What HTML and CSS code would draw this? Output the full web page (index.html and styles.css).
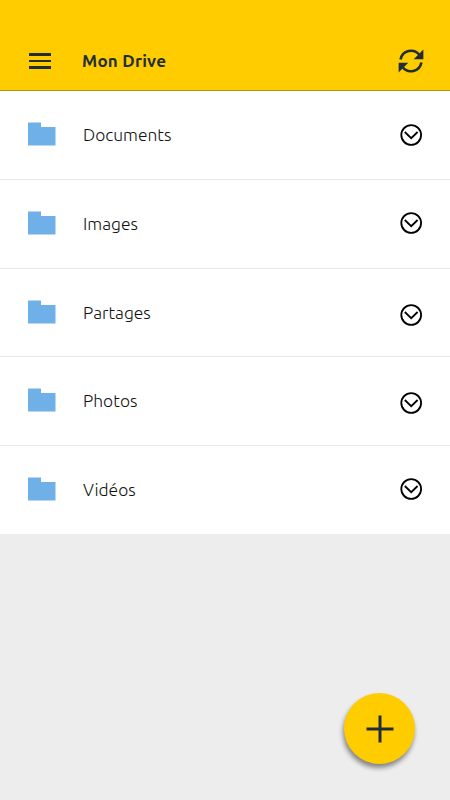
FILE: index.html
```
<!DOCTYPE html>
<html lang="fr">
<head>
    <meta charset="UTF-8">
    <meta name="viewport" content="width=device-width, initial-scale=1.0">
    <title>Mon Drive</title>
    <link rel="stylesheet" href="styles.css">
</head>
<body>
    <svg class="sprite" width="0" height="0">
        <symbol id="folder" viewBox="0 0 28 24">
            <path d="M0 1Q0 .5.5.5H13V5H27.500V23.500H.5Q0 23.500 0 23Z" fill="#70b0e8"/>
        </symbol>
        <symbol id="chevron" viewBox="0 0 24 24">
            <circle cx="12.200" cy="12" r="9.900"/>
            <path d="M5.800 9L12.200 15.200L18.600 9"/>
        </symbol>
    </svg>

    <header class="topbar">
        <button class="btn menu" aria-label="Menu">
            <span></span>
            <span></span>
            <span></span>
        </button>
        <h1 class="title">Mon Drive</h1>
        <button class="btn refresh" aria-label="Actualiser">
            <svg width="26" height="26" viewBox="0 0 26 26">
                <path class="arc" d="M2.600 11.500A10.600 10.600 0 0 1 21.500 7"/>
                <path class="arc" d="M23.400 14.500A10.600 10.600 0 0 1 4.500 19"/>
                <path class="head" d="M25.400 1.500V11.300H15.700Z"/>
                <path class="head" d="M.6 24.500V14.700H10.300Z"/>
            </svg>
        </button>
    </header>

    <ul class="folders">
        <li class="folder">
            <svg class="icon"><use href="#folder"/></svg>
            <span class="name">Documents</span>
            <svg class="more"><use href="#chevron"/></svg>
        </li>
        <li class="folder">
            <svg class="icon"><use href="#folder"/></svg>
            <span class="name">Images</span>
            <svg class="more images"><use href="#chevron"/></svg>
        </li>
        <li class="folder">
            <svg class="icon"><use href="#folder"/></svg>
            <span class="name">Partages</span>
            <svg class="more partages"><use href="#chevron"/></svg>
        </li>
        <li class="folder">
            <svg class="icon"><use href="#folder"/></svg>
            <span class="name">Photos</span>
            <svg class="more photos"><use href="#chevron"/></svg>
        </li>
        <li class="folder">
            <svg class="icon"><use href="#folder"/></svg>
            <span class="name">Vidéos</span>
            <svg class="more"><use href="#chevron"/></svg>
        </li>
    </ul>

    <button class="btn add" aria-label="Ajouter">
        <svg width="28" height="28" viewBox="0 0 28 28">
            <path d="M14 .5V27.500M.5 14H27.500"/>
        </svg>
    </button>
</body>
</html>
```
FILE: styles.css
```
* {
    box-sizing: border-box;
}

body {
    margin: 0;
    height: 100vh;
    overflow: hidden;
    background-color: #ededed;
    font-family: Ubuntu, "Noto Sans", sans-serif;
}

.sprite {
    position: absolute;
}

.btn {
    display: flex;
    padding: 0;
    border: none;
    background: none;
    cursor: pointer;
}

.topbar {
    display: flex;
    align-items: center;
    height: 91px;
    padding: 32px 26px 0 29px;
    background-color: #ffcc00;
    border-bottom: 1px solid #b39411;
}

.menu {
    flex-direction: column;
    gap: 4px;
    width: 22px;
}

.menu span {
    height: 2.5px;
    background-color: #222d38;
}

.title {
    flex: 1;
    margin: -1px 0 0 31px;
    color: #222d38;
    font-size: 17px;
    font-weight: 600;
    line-height: 19px;
    letter-spacing: 0.25px;
}

.refresh .arc {
    fill: none;
    stroke: #222d38;
    stroke-width: 2.6;
}

.refresh .head {
    fill: #222d38;
}

.folders {
    display: grid;
    grid-template-rows: repeat(4, 88.75px) 88px;
    height: 443px;
    margin: 0;
    padding: 0;
    background-color: #fff;
    list-style: none;
}

.folder {
    display: flex;
    align-items: center;
    padding: 0 27px 0 28px;
    border-bottom: 1px solid #e8e8e8;
}

.folder:nth-child(4) {
    padding-bottom: 1px;
}

.folder:last-child {
    padding-bottom: 2px;
    border-bottom: none;
}

.icon {
    width: 28px;
    height: 24px;
    margin-top: -1px;
}

.name {
    flex: 1;
    margin-left: 27px;
    color: #111;
    font-size: 17.4px;
    font-weight: 300;
}

.more {
    width: 24px;
    height: 24px;
    fill: none;
    stroke: #000;
    stroke-width: 1.8;
}

.images {
    margin-top: -2px;
}

.partages {
    margin-top: 6px;
}

.photos {
    margin-top: 5px;
}

.add {
    position: absolute;
    right: 35px;
    bottom: 36px;
    justify-content: center;
    align-items: center;
    width: 71px;
    height: 71px;
    background-color: #ffcc00;
    border-radius: 50%;
    box-shadow: -1px 4px 5px rgba(0, 0, 0, 0.45);
}

.add svg {
    fill: none;
    stroke: #222d38;
    stroke-width: 3;
}
```
